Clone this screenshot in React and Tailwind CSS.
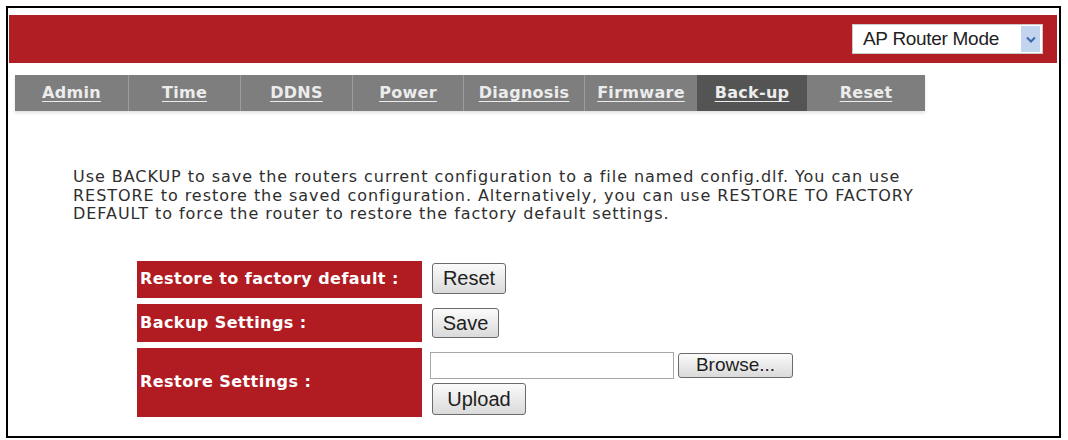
import React from "react";

const tabs = [
  { label: "Admin", w: "w-[113px]" },
  { label: "Time", w: "w-[112px]" },
  { label: "DDNS", w: "w-[112px]" },
  { label: "Power", w: "w-[111px]" },
  { label: "Diagnosis", w: "w-[121px]" },
  { label: "Firmware", w: "w-[113px]" },
  { label: "Back-up", w: "w-[110px]", active: true },
  { label: "Reset", w: "w-[118px]" },
];

function Btn({ className, children }) {
  return (
    <button
      className={`flex items-center justify-center rounded-[3px] border border-[#6b6b6b] bg-gradient-to-b from-[#fbfbfb] to-[#dadada] text-[#1e1e1e] font-['Liberation_Sans',Arial,sans-serif] ${className}`}
    >
      {children}
    </button>
  );
}

function Label({ children }) {
  return (
    <div className="flex w-[285px] items-center bg-[#b01c22] pl-[3px] text-[16px] font-bold tracking-[0.45px] text-white">
      {children}
    </div>
  );
}

export default function App() {
  return (
    <div className="h-[440px] w-[1068px] bg-white pl-[6px] pt-[6px] font-['DejaVu_Sans',Verdana,sans-serif]">
      <div className="flex h-[432px] w-[1055px] flex-col border-2 border-black">
        {/* header bar */}
        <div className="ml-[1px] mr-[2px] mt-[7px] flex h-[48px] items-center justify-end bg-[#b11f24] pr-[14px]">
          <div className="flex h-[30px] w-[191px] items-center border border-[#c9c9c9] bg-white pl-[10px] pr-[2px]">
            <span className="flex-1 text-[19px] tracking-[-0.3px] text-[#222] font-['Liberation_Sans',Arial,sans-serif]">
              AP Router Mode
            </span>
            <span className="flex h-[26px] w-[19px] items-center justify-center bg-[#c3d5ee]">
              <svg width="10" height="7" viewBox="0 0 10 7" fill="none">
                <path d="M1 1.5l4 4 4-4" stroke="#3b66b0" strokeWidth="2" />
              </svg>
            </span>
          </div>
        </div>

        {/* tabs */}
        <div className="ml-[7px] mt-[12px] flex h-[36px] w-fit bg-[#7e7e7e] shadow-[0_2px_3px_rgba(0,0,0,0.12)]">
          {tabs.map((t, i) => (
            <div
              key={t.label}
              className={`flex h-full items-center justify-center ${t.w} ${
                t.active ? "bg-[#545454]" : ""
              } ${i > 0 && i < 6 ? "border-l border-[#9c9c9c]" : ""}`}
            >
              <a className="text-[16px] font-bold tracking-[0.3px] text-[#ececec] underline underline-offset-[3px]">
                {t.label}
              </a>
            </div>
          ))}
        </div>

        {/* description */}
        <p className="ml-[65px] mt-[57px] text-[16px] leading-[18.5px] tracking-[0.95px] text-[#2e2e2e]">
          Use BACKUP to save the routers current configuration to a file named config.dlf. You can use
          <br />
          RESTORE to restore the saved configuration. Alternatively, you can use RESTORE TO FACTORY
          <br />
          DEFAULT to force the router to restore the factory default settings.
        </p>

        {/* settings table */}
        <div className="ml-[129px] mt-[37px] flex flex-col gap-[6px]">
          <div className="flex h-[37px] gap-[8px]">
            <Label>Restore to factory default :</Label>
            <Btn className="ml-[2px] mt-[2px] h-[31px] w-[74px] text-[20px]">Reset</Btn>
          </div>
          <div className="flex h-[38px] gap-[8px]">
            <Label>Backup Settings :</Label>
            <Btn className="ml-[2px] mt-[4px] h-[30px] w-[67px] text-[20px]">Save</Btn>
          </div>
          <div className="flex h-[69px] gap-[8px]">
            <Label>Restore Settings :</Label>
            <div className="flex flex-col pt-[4px]">
              <div className="flex items-center gap-[4px]">
                <div className="h-[27px] w-[244px] border border-[#a7a7a7] bg-white" />
                <Btn className="h-[25px] w-[115px] text-[19px]">Browse...</Btn>
              </div>
              <Btn className="ml-[2px] mt-[4px] h-[32px] w-[94px] text-[20px]">Upload</Btn>
            </div>
          </div>
        </div>
      </div>
    </div>
  );
}
